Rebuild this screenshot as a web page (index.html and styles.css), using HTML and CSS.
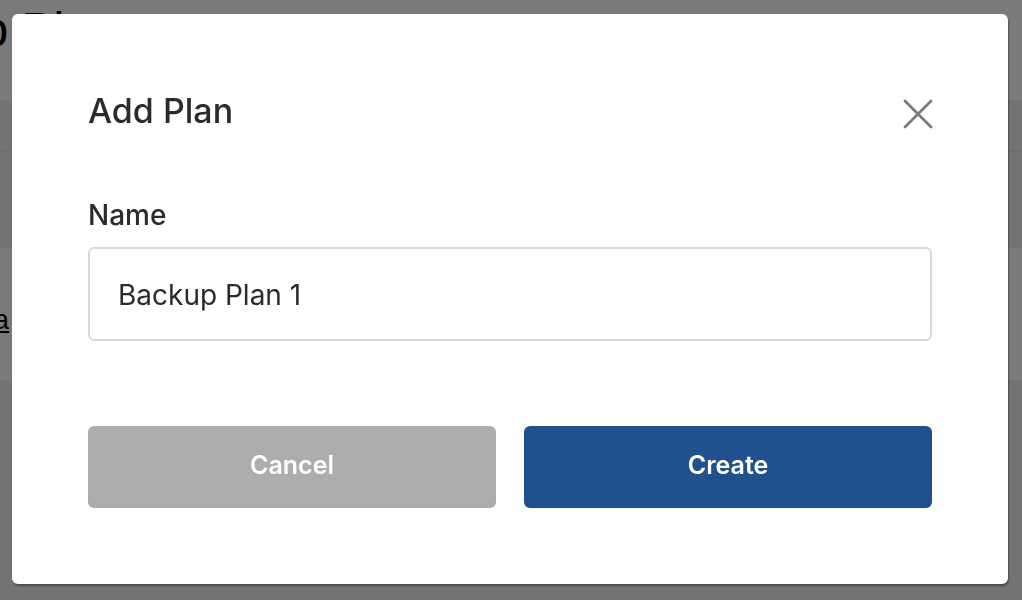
FILE: index.html
```html
<!DOCTYPE html>
<html lang="en">
<head>
    <meta charset="UTF-8">
    <meta name="viewport" content="width=device-width, initial-scale=1.0">
    <title>Add Plan</title>
    <link rel="stylesheet" href="styles.css">
</head>
<body>
    <div class="page">
        <header class="page-header">
            <h1>Backup Plans</h1>
        </header>
        <div class="table">
            <div class="table-head"></div>
            <div class="table-row table-row-muted"></div>
            <div class="table-row">
                <a href="#">Data</a>
            </div>
            <div class="table-foot"></div>
        </div>
    </div>

    <div class="overlay">
        <div class="modal">
            <div class="modal-header">
                <h2>Add Plan</h2>
                <button class="close-btn" type="button" aria-label="Close">
                    <svg width="30" height="30" viewBox="0 0 30 30">
                        <path d="M2 2 L28 28 M28 2 L2 28" stroke="#7a7a7a" stroke-width="2.8" stroke-linecap="round" fill="none"/>
                    </svg>
                </button>
            </div>
            <form class="plan-form" onsubmit="event.preventDefault();">
                <label for="plan-name">Name</label>
                <input id="plan-name" type="text" value="Backup Plan 1">
                <div class="actions">
                    <button type="button" class="btn btn-cancel">Cancel</button>
                    <button type="submit" class="btn btn-create">Create</button>
                </div>
            </form>
        </div>
    </div>
</body>
</html>
```

FILE: styles.css
```css
body {
    margin: 0;
    font-family: 'Inter', 'Liberation Sans', sans-serif;
    background: #fff;
    overflow: hidden;
}

/* page behind the dialog */
.page {
    height: 600px;
}

.page-header {
    height: 100px;
    overflow: hidden;
}

.page-header h1 {
    margin: 0 0 0 -152px;
    padding-top: 2px;
    font-family: 'Liberation Sans', sans-serif;
    font-size: 48px;
    font-weight: 400;
    color: #000;
}

.table-head {
    height: 51px;
    background: #f0f0f0;
    border-bottom: 1px solid #e4e4e4;
}

.table-row {
    height: 96px;
    background: #f0f0f0;
}

.table-row:nth-child(3) {
    height: 132px;
    background: #fff;
    display: flex;
    align-items: center;
}

.table-row a {
    margin-left: -50px;
    margin-top: 12px;
    font-family: 'Liberation Sans', sans-serif;
    font-size: 28px;
    color: #000;
}

.table-foot {
    height: 220px;
    background: #f0f0f6;
}

/* dialog */
.overlay {
    position: fixed;
    inset: 0;
    background: rgba(0, 0, 0, 0.52);
    display: flex;
    align-items: flex-start;
    padding: 14px 14px 0 12px;
}

.modal {
    flex: 1;
    background: #fff;
    border-radius: 6px;
    padding: 77px 76px 76px;
    box-shadow: 1px 2px 2px rgba(0, 0, 0, 0.35);
}

.modal-header {
    display: flex;
    justify-content: space-between;
    align-items: center;
}

.modal-header h2 {
    margin: 0;
    font-size: 34px;
    line-height: 40px;
    font-weight: 500;
    color: #2b2b2b;
}

.close-btn {
    border: none;
    background: none;
    padding: 0;
    margin: 6px -1px 0 0;
    width: 30px;
    height: 30px;
    cursor: pointer;
    display: flex;
}

.plan-form {
    display: flex;
    flex-direction: column;
    margin-top: 67px;
}

.plan-form label {
    font-size: 28px;
    line-height: 34px;
    font-weight: 500;
    color: #2b2b2b;
}

.plan-form input {
    margin-top: 15px;
    height: 94px;
    box-sizing: border-box;
    border: 2px solid #d5d8dc;
    border-radius: 6px;
    padding: 2px 28px 0;
    font-family: 'Inter', 'Liberation Sans', sans-serif;
    font-size: 28px;
    color: #2b2b2b;
    outline: none;
}

.actions {
    display: flex;
    gap: 28px;
    margin-top: 85px;
}

.btn {
    flex: 1;
    height: 82px;
    border: none;
    border-radius: 6px;
    padding: 0 0 4px;
    font-family: 'Inter', 'Liberation Sans', sans-serif;
    font-size: 25px;
    font-weight: 600;
    color: #fff;
    cursor: pointer;
}

.btn-cancel {
    background: #adadad;
}

.btn-create {
    background: #21518c;
}
```
